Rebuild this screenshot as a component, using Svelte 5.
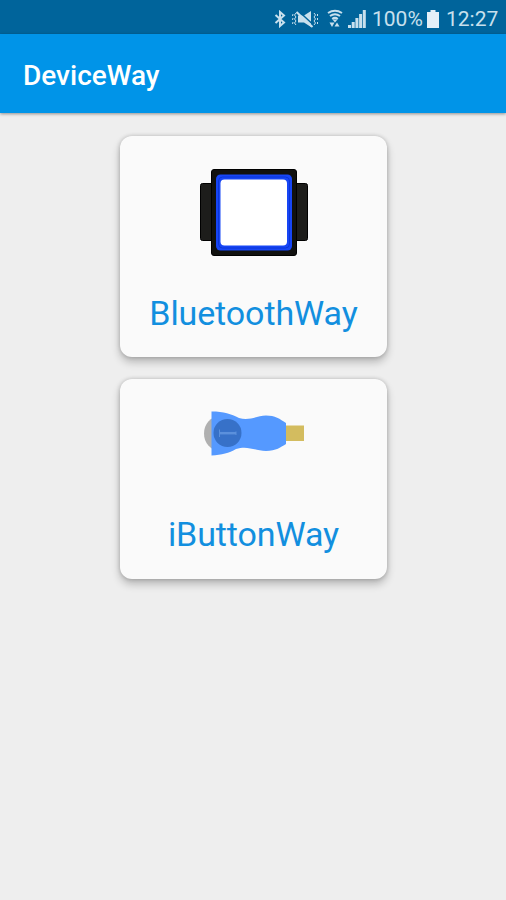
<script>
  const signalBars = [3, 6, 10, 14, 18];

  const devices = [
    { id: 'bluetooth', name: 'BluetoothWay' },
    { id: 'ibutton', name: 'iButtonWay' },
  ];
</script>

<div class="screen">
  <div class="status-bar">
    <svg class="bluetooth" width="12" height="18" viewBox="0 0 12 18">
      <path d="M1.5 5 L10 12.5 L6 16 V2 L10 5.5 L1.5 13" />
    </svg>
    <svg class="mute" width="26" height="18" viewBox="0 0 26 18">
      <path class="fill" d="M6 5.5 H12 L19 1 V17 L12 12.5 H6 Z" />
      <path class="slash" d="M6.5 1 L21 14.5" />
      <path class="line" d="M4.5 2 L20.5 17" />
      <path class="wave" d="M4 3 L2.5 5 L4 7 L2.5 9 L4 11 L2.5 13 L4 15 M1 4 L0.5 6 M1 8 L0.500 10 M1 12 L0.500 14 M22 3 L23.500 5 L22 7 L23.500 9 L22 11 L23.500 13 L22 15 M25.500 4 V6 M25.500 8 V10 M25.500 12 V14" />
    </svg>
    <svg class="wifi" width="16" height="19" viewBox="0 0 16 19">
      <path class="arc" d="M1 4 Q8 -0.5 15 4 M3 7 Q8 3.4 13 7 M5.200 10 Q8 7.800 10.800 10" />
      <path class="fill" d="M5.500 10.500 H10.500 L8 13.500 Z M2.500 13.500 H7.500 L5 18 Z M7.500 17.500 H12.500 L10 13.500 Z" />
    </svg>
    <svg class="signal" width="18" height="18" viewBox="0 0 18 18">
      {#each signalBars as height, i}
        <rect x={i * 3.7} y={18 - height} width="3" {height} />
      {/each}
    </svg>
    <span class="percent">100%</span>
    <svg class="battery" width="12" height="18" viewBox="0 0 12 18">
      <path d="M3.5 0 H8.5 V2 H12 V18 H0 V2 H3.5 Z" />
    </svg>
    <span class="clock">12:27</span>
  </div>

  <header class="app-bar">
    <h1>DeviceWay</h1>
  </header>

  <main>
    {#each devices as device}
      <button class="card {device.id}">
        {#if device.id === 'bluetooth'}
          <svg width="108" height="87" viewBox="0 0 108 87">
            <rect x="0.5" y="14.5" width="107" height="57" rx="2" fill="#1d1d1b" stroke="#000" />
            <rect x="11.5" y="0.5" width="85" height="86" rx="2.5" fill="#11110f" stroke="#000" />
            <rect x="16" y="5.5" width="76" height="76" rx="4.5" fill="#1746f5" />
            <rect x="18.5" y="8" width="71" height="71" rx="4" fill="none" stroke="#0b35d8" />
            <rect x="20.5" y="10.5" width="66.5" height="66" rx="4" fill="#fff" />
          </svg>
        {:else}
          <svg width="100" height="45" viewBox="0 0 100 45">
            <ellipse cx="15" cy="22.5" rx="15" ry="17" fill="#b0b0b0" />
            <path d="M7.5 0.5 C20 0.5 27 3 35 7 C46 10 53 4.5 62 4.5 C71 4.5 76 8 82 12 V33 C77 36 72 40 62 40 C51 40 44 34 32 38 C25 42 18 44 7.5 44.5 Z" fill="#5599ff" />
            <circle cx="23.5" cy="22" r="14" fill="#3771c8" />
            <path d="M15.5 18.5 V26 M32 20.5 V24" stroke="#5b90dc" />
            <path d="M15.5 22.2 H32" stroke="#5b90dc" stroke-width="2.5" />
            <rect x="82" y="14.5" width="18" height="15.5" fill="#d3bc5f" />
          </svg>
        {/if}
        <span class="label">{device.name}</span>
      </button>
    {/each}
  </main>
</div>

<style>
  :global(body) {
    margin: 0;
    background: #eee;
  }

  .screen {
    min-height: 900px;
    background: #eee;
    font-family: Roboto, sans-serif;
  }

  .status-bar {
    display: flex;
    align-items: center;
    justify-content: flex-end;
    box-sizing: border-box;
    height: 34px;
    padding: 3px 8px 0 0;
    background: #00649b;
    color: #c8e0ed;
    font-size: 21px;
  }

  .status-bar svg {
    flex: none;
    fill: #c8e0ed;
  }

  .status-bar .bluetooth {
    margin-right: 6px;
    fill: none;
    stroke: #c8e0ed;
    stroke-width: 2;
  }

  .mute {
    margin-right: 9px;
  }

  .mute path,
  .arc {
    fill: none;
    stroke: #c8e0ed;
  }

  .mute .fill {
    fill: #c8e0ed;
    stroke: none;
  }

  .mute .slash {
    stroke: #00649b;
    stroke-width: 1.5;
  }

  .mute .line {
    stroke-width: 2;
  }

  .arc {
    stroke-width: 2;
  }

  .wifi {
    margin-right: 5px;
  }

  .signal {
    margin-right: 6px;
  }

  .percent {
    width: 51px;
    margin-right: 4px;
    white-space: nowrap;
  }

  .status-bar .battery {
    margin-right: 7px;
    fill: #e4f0f8;
  }

  .clock {
    width: 52px;
    white-space: nowrap;
  }

  .app-bar {
    display: flex;
    align-items: center;
    height: 79px;
    padding: 3px 0 0 23px;
    box-sizing: border-box;
    background: #0094e8;
    box-shadow: 0 1px 3px rgba(0, 0, 0, 0.4);
  }

  h1 {
    margin: 0;
    color: #fff;
    font-size: 28px;
    font-weight: 500;
  }

  main {
    display: flex;
    flex-direction: column;
    align-items: center;
    gap: 22px;
    padding: 23px 0 0 1px;
  }

  .card {
    display: flex;
    flex-direction: column;
    align-items: center;
    justify-content: space-between;
    box-sizing: border-box;
    width: 267px;
    border: none;
    border-radius: 12px;
    background: #fafafa;
    box-shadow: 0 5px 9px rgba(0, 0, 0, 0.24), 0 0 4px rgba(0, 0, 0, 0.2);
    font-family: inherit;
  }

  .bluetooth.card {
    height: 221px;
    padding: 33px 0 24px;
  }

  .ibutton.card {
    height: 200px;
    padding: 32px 0 25px;
  }

  .label {
    color: #128fdf;
    font-size: 34px;
    line-height: 40px;
    letter-spacing: -0.1px;
  }
</style>
